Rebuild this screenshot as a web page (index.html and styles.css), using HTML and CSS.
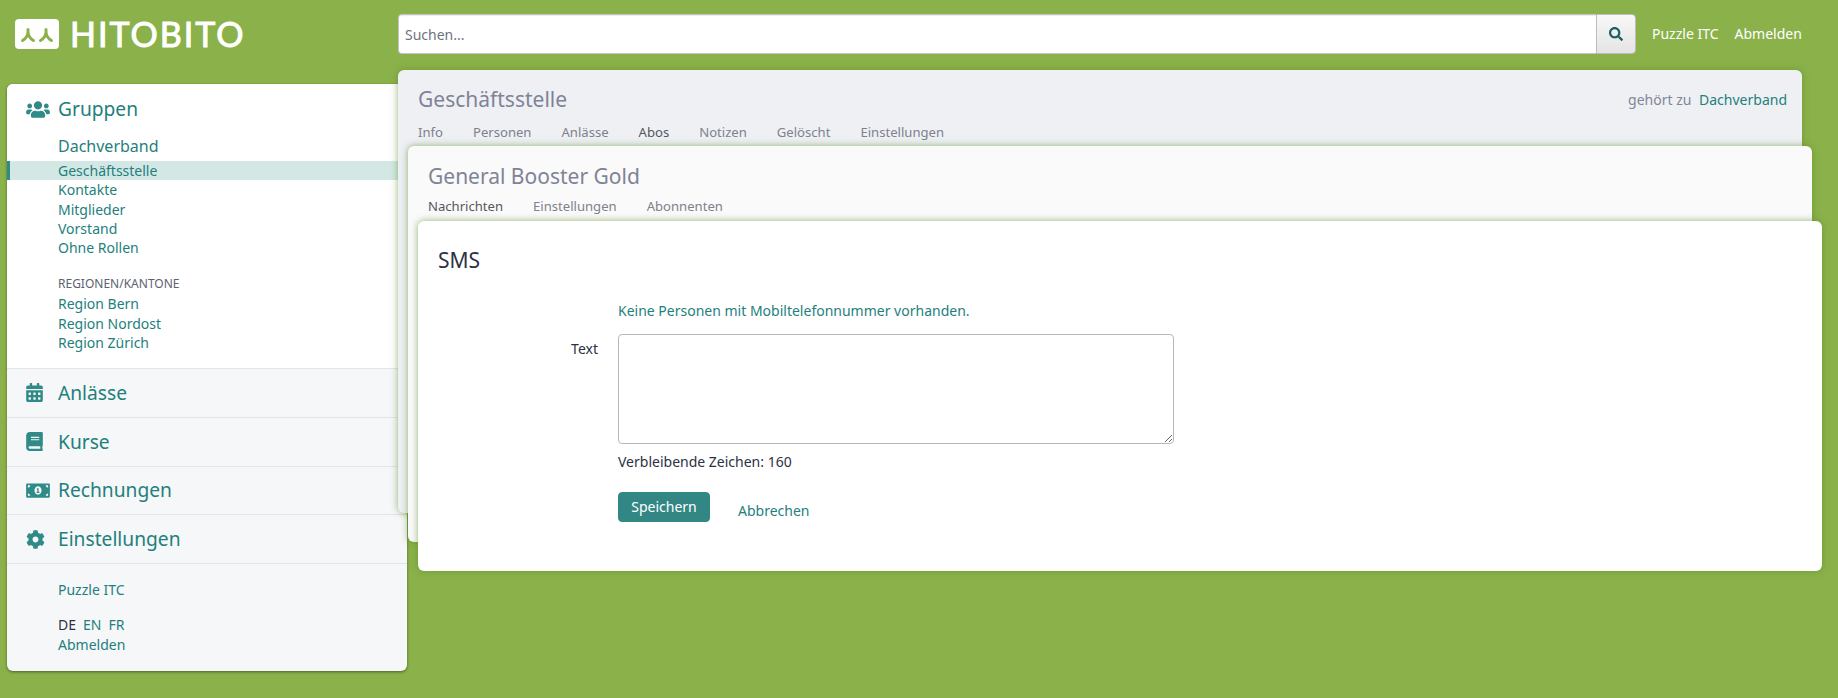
FILE: index.html
```html
<!DOCTYPE html>
<html lang="de">
<head>
<meta charset="utf-8">
<title>Hitobito</title>
<link rel="stylesheet" href="styles.css">
</head>
<body>
<header class="topbar">
  <a class="brand" href="#">
    <svg class="logo-mark" viewBox="0 0 44 30"><rect width="44" height="30" rx="4" fill="#fff"/><path d="M13 10.500v2.500c0 3.500-2.200 6.500-5.500 8.500M13 13c0 3.500 2.200 6.500 5.500 8.500M31 10.500v2.500c0 3.500-2.200 6.500-5.500 8.500M31 13c0 3.500 2.200 6.500 5.500 8.500" fill="none" stroke="#8bb14a" stroke-width="3" stroke-linecap="round"/></svg>
    <span class="wordmark">HITOBITO</span>
  </a>
  <form class="search">
    <input class="search-input" type="text" placeholder="Suchen...">
    <button class="search-btn" type="button"><svg viewBox="0 0 512 512" class="ico-search"><path d="M505 442.700L405.300 343c-4.500-4.500-10.600-7-17-7H372c27.600-35.300 44-79.700 44-128C416 93.100 322.900 0 208 0S0 93.100 0 208s93.100 208 208 208c48.300 0 92.700-16.400 128-44v16.300c0 6.400 2.500 12.500 7 17l99.700 99.700c9.400 9.400 24.600 9.400 33.900 0l28.300-28.300c9.400-9.400 9.400-24.600.1-34zM208 336c-70.700 0-128-57.200-128-128 0-70.700 57.200-128 128-128 70.700 0 128 57.200 128 128 0 70.700-57.200 128-128 128z"/></svg></button>
  </form>
  <nav class="top-links"><a href="#">Puzzle ITC</a><a href="#">Abmelden</a></nav>
</header>

<div class="page">
  <aside class="sidebar">
    <section class="nav-main">
      <a class="nav-head" href="#"><span class="nav-ico"><svg viewBox="0 0 640 512"><path d="M96 224c35.300 0 64-28.700 64-64s-28.700-64-64-64-64 28.700-64 64 28.700 64 64 64zm448 0c35.300 0 64-28.700 64-64s-28.700-64-64-64-64 28.700-64 64 28.700 64 64 64zm32 32h-64c-17.600 0-33.500 7.100-45.100 18.600 40.300 22.100 68.900 62 75.100 109.400h66c17.700 0 32-14.300 32-32v-32c0-35.300-28.700-64-64-64zm-256 0c61.900 0 112-50.100 112-112S381.900 32 320 32 208 82.100 208 144s50.100 112 112 112zm76.800 32h-8.300c-20.800 10-43.900 16-68.500 16s-47.600-6-68.500-16h-8.300C179.600 288 128 339.600 128 403.200V432c0 26.500 21.500 48 48 48h288c26.500 0 48-21.500 48-48v-28.800c0-63.600-51.600-115.200-115.200-115.200zm-223.700-13.400C161.500 263.100 145.600 256 128 256H64c-35.300 0-64 28.700-64 64v32c0 17.700 14.300 32 32 32h65.900c6.300-47.400 34.900-87.300 75.200-109.400z"/></svg></span>Gruppen</a>
      <a class="nav-group" href="#">Dachverband</a>
      <ul class="nav-list">
        <li class="active"><a href="#">Geschäftsstelle</a></li>
        <li><a href="#">Kontakte</a></li>
        <li><a href="#">Mitglieder</a></li>
        <li><a href="#">Vorstand</a></li>
        <li><a href="#">Ohne Rollen</a></li>
      </ul>
      <div class="nav-label">REGIONEN/KANTONE</div>
      <ul class="nav-list">
        <li><a href="#">Region Bern</a></li>
        <li><a href="#">Region Nordost</a></li>
        <li><a href="#">Region Zürich</a></li>
      </ul>
    </section>
    <a class="nav-row" href="#"><span class="nav-ico"><svg class="narrow" viewBox="0 0 448 512"><path d="M0 464c0 26.500 21.500 48 48 48h352c26.500 0 48-21.500 48-48V192H0v272zm320-196c0-6.600 5.400-12 12-12h40c6.600 0 12 5.400 12 12v40c0 6.600-5.400 12-12 12h-40c-6.600 0-12-5.400-12-12v-40zm0 128c0-6.600 5.400-12 12-12h40c6.600 0 12 5.400 12 12v40c0 6.600-5.400 12-12 12h-40c-6.600 0-12-5.400-12-12v-40zM192 268c0-6.600 5.400-12 12-12h40c6.600 0 12 5.400 12 12v40c0 6.600-5.400 12-12 12h-40c-6.600 0-12-5.400-12-12v-40zm0 128c0-6.600 5.400-12 12-12h40c6.600 0 12 5.400 12 12v40c0 6.600-5.400 12-12 12h-40c-6.600 0-12-5.400-12-12v-40zM64 268c0-6.600 5.400-12 12-12h40c6.600 0 12 5.400 12 12v40c0 6.600-5.400 12-12 12H76c-6.600 0-12-5.400-12-12v-40zm0 128c0-6.600 5.400-12 12-12h40c6.600 0 12 5.400 12 12v40c0 6.600-5.400 12-12 12H76c-6.600 0-12-5.400-12-12v-40zM400 64h-48V16c0-8.800-7.200-16-16-16h-32c-8.800 0-16 7.200-16 16v48H160V16c0-8.800-7.200-16-16-16h-32c-8.800 0-16 7.200-16 16v48H48C21.500 64 0 85.500 0 112v48h448v-48c0-26.500-21.500-48-48-48z"/></svg></span>Anlässe</a>
    <a class="nav-row" href="#"><span class="nav-ico"><svg class="narrow" viewBox="0 0 448 512"><path d="M448 360V24c0-13.300-10.700-24-24-24H96C43 0 0 43 0 96v320c0 53 43 96 96 96h328c13.300 0 24-10.700 24-24v-16c0-7.500-3.500-14.300-8.900-18.700-4.200-15.400-4.200-59.300 0-74.700 5.400-4.300 8.900-11.100 8.900-18.600zM128 134c0-3.300 2.700-6 6-6h212c3.300 0 6 2.700 6 6v20c0 3.300-2.700 6-6 6H134c-3.300 0-6-2.700-6-6v-20zm0 64c0-3.300 2.700-6 6-6h212c3.300 0 6 2.700 6 6v20c0 3.300-2.700 6-6 6H134c-3.300 0-6-2.700-6-6v-20zm253.400 250H96c-17.700 0-32-14.300-32-32 0-17.600 14.400-32 32-32h285.400c-1.900 17.100-1.900 46.900 0 64z"/></svg></span>Kurse</a>
    <a class="nav-row" href="#"><span class="nav-ico"><svg viewBox="0 0 640 512"><path d="M352 288h-16v-88c0-4.420-3.580-8-8-8h-13.580c-4.740 0-9.370 1.400-13.310 4.030l-15.330 10.220a7.990 7.990 0 0 0-2.220 11.090l8.880 13.310a7.990 7.990 0 0 0 11.090 2.220l.47-.31V288h-16c-4.420 0-8 3.580-8 8v16c0 4.420 3.580 8 8 8h64c4.420 0 8-3.580 8-8v-16c0-4.420-3.580-8-8-8zM608 64H32C14.330 64 0 78.330 0 96v320c0 17.670 14.330 32 32 32h576c17.670 0 32-14.330 32-32V96c0-17.670-14.330-32-32-32zM48 400v-64c35.350 0 64 28.650 64 64H48zm0-224v-64h64c0 35.350-28.650 64-64 64zm272 192c-53 0-96-50.150-96-112 0-61.860 43-112 96-112s96 50.140 96 112c0 61.870-43 112-96 112zm272 32h-64c0-35.350 28.650-64 64-64v64zm0-224c-35.350 0-64-28.650-64-64h64v64z"/></svg></span>Rechnungen</a>
    <a class="nav-row" href="#"><span class="nav-ico"><svg class="cog" viewBox="0 0 512 512"><path d="M487.400 315.700l-42.600-24.600c4.300-23.200 4.300-47 0-70.200l42.600-24.600c4.900-2.800 7.100-8.600 5.500-14-11.100-35.600-30-67.800-54.700-94.600-3.800-4.100-10-5.100-14.800-2.300L380.800 110c-17.900-15.400-38.500-27.300-60.800-35.100V25.800c0-5.600-3.900-10.500-9.400-11.700-36.700-8.200-74.300-7.800-109.200 0-5.500 1.200-9.400 6.100-9.400 11.700V75c-22.200 7.900-42.800 19.800-60.800 35.100L88.700 85.500c-4.900-2.800-11-1.900-14.800 2.300-24.700 26.700-43.600 58.900-54.700 94.600-1.700 5.400.6 11.200 5.500 14L67.300 221c-4.300 23.200-4.300 47 0 70.200l-42.600 24.600c-4.900 2.800-7.100 8.600-5.500 14 11.100 35.600 30 67.800 54.700 94.600 3.800 4.100 10 5.100 14.800 2.300l42.600-24.600c17.900 15.400 38.500 27.300 60.800 35.100v49.200c0 5.600 3.900 10.500 9.400 11.700 36.700 8.200 74.300 7.800 109.200 0 5.500-1.200 9.400-6.100 9.400-11.700v-49.200c22.200-7.900 42.800-19.800 60.800-35.100l42.600 24.600c4.900 2.800 11 1.900 14.800-2.300 24.700-26.700 43.600-58.900 54.700-94.600 1.500-5.500-.7-11.300-5.600-14.100zM256 336c-44.100 0-80-35.900-80-80s35.900-80 80-80 80 35.900 80 80-35.900 80-80 80z"/></svg></span>Einstellungen</a>
    <footer class="nav-foot">
      <a class="foot-user" href="#">Puzzle ITC</a>
      <div class="langs"><span>DE</span><a href="#">EN</a><a href="#">FR</a></div>
      <a href="#">Abmelden</a>
    </footer>
  </aside>

  <main class="stack">
    <section class="card card-one">
      <div class="card-top">
        <h1 class="card-title">Geschäftsstelle</h1>
        <div class="belongs">gehört zu <a href="#">Dachverband</a></div>
      </div>
      <nav class="tabs"><a href="#">Info</a><a href="#">Personen</a><a href="#">Anlässe</a><a class="current" href="#">Abos</a><a href="#">Notizen</a><a href="#">Gelöscht</a><a href="#">Einstellungen</a></nav>
      <section class="card card-two">
        <h2 class="card-title">General Booster Gold</h2>
        <nav class="tabs"><a class="current" href="#">Nachrichten</a><a href="#">Einstellungen</a><a href="#">Abonnenten</a></nav>
        <section class="card card-three">
          <h3 class="form-title">SMS</h3>
          <form class="form">
            <p class="hint"><a href="#">Keine Personen mit Mobiltelefonnummer vorhanden.</a></p>
            <div class="field">
              <label class="field-label" for="sms">Text</label>
              <textarea id="sms" class="field-area"></textarea>
            </div>
            <p class="remaining">Verbleibende Zeichen: 160</p>
            <div class="actions">
              <button class="btn" type="button">Speichern</button>
              <a class="cancel" href="#">Abbrechen</a>
            </div>
          </form>
        </section>
      </section>
    </section>
  </main>
</div>
</body>
</html>
```

FILE: styles.css
```css
* { box-sizing: border-box; }
html, body { margin: 0; padding: 0; }
body {
  background: #8bb14a;
  font-family: "Noto Sans", "Open Sans", sans-serif;
  font-size: 14px;
  line-height: 19.600px;
  color: #2c3144;
  height: 698px;
  overflow: hidden;
}
a { color: #237f7d; text-decoration: none; }
ul { list-style: none; margin: 0; padding: 0; }

.topbar {
  display: flex;
  align-items: flex-start;
  height: 70px;
  padding: 14px 0 0 15px;
}
.brand { display: flex; align-items: center; width: 383px; height: 40px; color: #fff; }
.logo-mark { width: 44px; height: 30px; display: block; }
.wordmark {
  margin-left: 11px;
  font-family: Lato, sans-serif;
  font-weight: 400;
  font-size: 34px;
  line-height: 40px;
  letter-spacing: 2px;
  -webkit-text-stroke: 1px #fff;
  color: #fff;
}
.search { display: flex; width: 1238px; height: 40px; }
.search-input {
  flex: 1;
  height: 40px;
  border: 1px solid #c4c4c4;
  border-right: 0;
  border-radius: 4px 0 0 4px;
  padding: 0 6px;
  font: 14px "Noto Sans", sans-serif;
  background: #fff;
  box-shadow: inset 0 1px 1px rgba(0,0,0,.08);
}
.search-input::placeholder { color: #6e7380; opacity: 1; }
.search-btn {
  width: 40px;
  height: 40px;
  padding: 0;
  border: 1px solid #bdbdbd;
  border-radius: 0 4px 4px 0;
  background: linear-gradient(#f8f8f8, #e4e4e4);
  display: flex;
  align-items: center;
  justify-content: center;
}
.ico-search { width: 14px; height: 14px; fill: #1f5f60; }
.top-links { display: flex; gap: 16px; margin-left: 16px; height: 40px; align-items: center; }
.top-links a { color: #fff; }

.page { display: flex; align-items: flex-start; padding-left: 7px; }

.sidebar {
  width: 400px;
  height: 587px;
  margin-top: 14px;
  background: #f6f7f9;
  border-radius: 6px;
  box-shadow: 0 1px 3px rgba(0,0,0,.45);
  overflow: hidden;
  flex: none;
}
.nav-main { background: #fff; height: 285px; padding-top: 11px; border-bottom: 1px solid #e2e4ec; }
.nav-head, .nav-row {
  display: flex;
  align-items: center;
  font-size: 19.200px;
  line-height: 28px;
}
.nav-head { height: 28px; }
.nav-ico { width: 51px; padding-left: 19px; display: flex; align-items: center; flex: none; }
.nav-ico svg { width: 24px; height: 19px; fill: #2f8a88; display: block; }
.nav-ico svg.narrow { width: 17px; height: 19px; }
.nav-ico svg.cog { width: 19px; height: 19px; }
.nav-group { display: block; margin: 12px 0 4px 51px; font-size: 16px; line-height: 22px; }
.nav-list li { padding-left: 51px; height: 19.300px; line-height: 19.300px; }
.nav-list li.active { background: #d3e8e5; border-left: 3px solid #2f8a88; padding-left: 48px; }
.nav-label { margin: 18px 0 2px 51px; font-size: 12px; line-height: 17px; color: #5d6170; }
.nav-row { height: 48.750px; border-bottom: 1px solid #e2e4ec; }
.nav-foot { padding: 16px 0 0 51px; display: flex; flex-direction: column; align-items: flex-start; }
.foot-user { margin-bottom: 15px; }
.langs { display: flex; gap: 7px; margin-bottom: 1px; }

.stack { flex: 1; margin-left: -9px; min-width: 0; position: relative; padding-right: 36px; }
.card { border-radius: 6px; position: relative; box-shadow: 0 0 7px rgba(90,140,40,.65); }
.card-one { background: #eef0f4; height: 443px; padding: 14px 20px 0; }
.card-top { display: flex; justify-content: space-between; align-items: flex-start; }
.card-title { margin: 0; font-size: 21px; line-height: 30px; font-weight: 400; color: #7f8396; }
.belongs { color: #82869a; margin-top: 6px; margin-right: -5px; }
.belongs a { margin-left: 4px; }
.tabs { display: flex; gap: 30px; margin-top: 8px; font-size: 13.100px; line-height: 20px; }
.tabs a { color: #7f818c; }
.tabs a.current { color: #55575f; }
.card-two {
  background: #fafafa;
  height: 396px;
  margin: 4px -30px 0 -10px;
  padding: 15px 20px 0;
}
.card-two .tabs { margin-top: 5px; }
.card-three {
  background: #fff;
  height: 350px;
  margin: 5px -30px 0 -10px;
  padding: 25px 20px 0;
}
.form-title { margin: 0; font-size: 21px; line-height: 28px; font-weight: 400; color: #2c3144; }
.form { padding-left: 180px; }
.hint { margin: 27px 0 0; }
.field { position: relative; margin-top: 13px; height: 110px; }
.field-label { position: absolute; right: calc(100% + 20px); top: 5px; color: #2c3144; }
.field-area {
  display: block;
  width: 556px;
  height: 110px;
  border: 1px solid #b7b7b7;
  border-radius: 4px;
  background: #fff;
}
.remaining { margin: 8.500px 0 0; }
.actions { display: flex; align-items: flex-start; margin-top: 20.500px; }
.btn {
  width: 92px;
  height: 30px;
  padding: 0 0 2px;
  border: 1px solid #2f8a88;
  border-radius: 4px;
  background: #328785;
  color: #fff;
  font: 14px "Noto Sans", sans-serif;
}
.cancel { margin: 9px 0 0 28px; }
```
